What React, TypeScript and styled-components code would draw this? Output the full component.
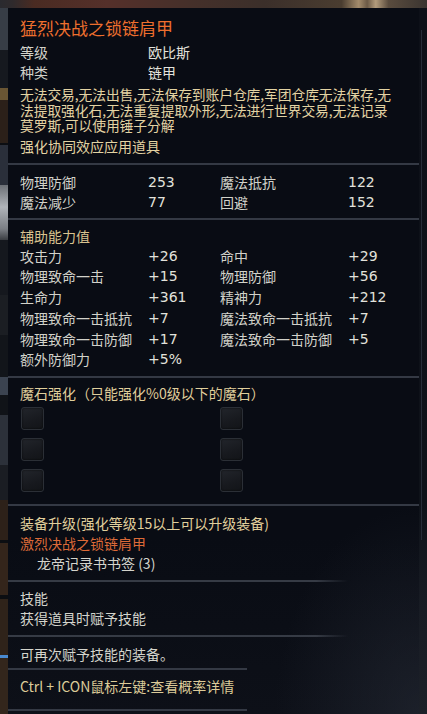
import React from "react";
import styled, { createGlobalStyle } from "styled-components";

const Global = createGlobalStyle`
  html, body { margin: 0; padding: 0; background: #0c0f16; }
  body { font-family: "Noto Sans CJK SC", "Noto Sans", sans-serif; }
  * { box-sizing: border-box; }
`;

const Page = styled.div`
  width: 427px;
  height: 714px;
  overflow: hidden;
  display: flex;
  flex-direction: column;
  background: #0c0f16;
`;

const TopStrip = styled.div`
  height: 8px;
  flex: none;
  background: linear-gradient(90deg, #2a2a2f 0, #2f2a2c 3%, #4a2b22 8%, #55302a 25%, #45302a 45%, #3b2f2a 62%, #4a3d30 80%, #a48c6c 84%, #6c5a46 86%, #b39c7c 88%, #5a4c3e 91%, #3a3430 100%);
`;

const Body = styled.div`
  flex: 1;
  display: flex;
  flex-direction: row;
  min-height: 0;
`;

const LeftStrip = styled.div`
  width: 8px;
  flex: none;
  display: flex;
  flex-direction: column;
`;

const Chip = styled.div<{ $h: number; $c: string }>`
  height: ${(p) => p.$h}px;
  flex: none;
  background: ${(p) => p.$c};
`;

const RightStrip = styled.div`
  flex: 1;
  background:
    linear-gradient(90deg, transparent 2px, #262c38 2px 3px, transparent 3px) 0 22px / 100% 510px no-repeat,
    linear-gradient(180deg, #0d1018 0, #0e1219 70%, #181c24 85%, #1c2028 100%);
`;

const Tooltip = styled.div`
  width: 411px;
  flex: none;
  display: flex;
  flex-direction: column;
  color: #d4d4cc;
  font-size: 14px;
  background:
    radial-gradient(ellipse 180px 260px at 100% 100%, rgba(40, 45, 56, 0.55), transparent 80%),
    linear-gradient(180deg, #090c14 0, #090c14 75%, #0d1018 100%);
`;

const Section = styled.div<{ $pt: number; $pb: number; $fade?: boolean; $first?: boolean }>`
  padding: ${(p) => p.$pt}px 12px ${(p) => p.$pb}px 12px;
  ${(p) =>
    p.$first
      ? ""
      : p.$fade
      ? `background: linear-gradient(90deg, #363b45 0, #363b45 308px, rgba(54,59,69,0) 340px) top left / 100% 2px no-repeat; padding-top: ${p.$pt + 2}px;`
      : `border-top: 2px solid #343944;`}
`;

const Title = styled.div<{ $c?: string }>`
  font-size: 17px;
  line-height: 24px;
  color: ${(p) => p.$c || "#ee6f2e"};
  margin-bottom: 2px;
`;

const KV = styled.div`
  display: grid;
  grid-template-columns: 128px 1fr;
  line-height: 20px;
`;

const Label = styled.span<{ $c?: string }>`
  color: ${(p) => p.$c || "#d2d2ca"};
  white-space: nowrap;
`;

const Value = styled.span`
  color: #e2e2dc;
  white-space: nowrap;
`;

const Num = styled.span`
  font-family: "DejaVu Sans", "Noto Sans", sans-serif;
  color: #e2e2dc;
  white-space: nowrap;
  font-size: 14px;
`;

const Desc = styled.div`
  margin-top: 5px;
  display: flex;
  flex-direction: column;
  color: #e3d3a3;
  letter-spacing: -0.1px;
`;

const DescLine = styled.div`
  height: 15.5px;
  line-height: 15.5px;
  font-size: 13.8px;
  white-space: nowrap;
`;

const Line = styled.div<{ $c?: string; $indent?: number; $mt?: number }>`
  line-height: 20px;
  color: ${(p) => p.$c || "#d4d4cc"};
  padding-left: ${(p) => p.$indent || 0}px;
  margin-top: ${(p) => p.$mt || 0}px;
  white-space: nowrap;
`;

const StatGrid = styled.div<{ $lh: number }>`
  display: grid;
  grid-template-columns: 128px 72px 128px 1fr;
  line-height: ${(p) => p.$lh}px;
`;

const SocketGrid = styled.div`
  display: grid;
  grid-template-columns: 199px 23px;
  row-gap: 8px;
  margin-top: 4px;
  padding-left: 1px;
`;

const Socket = styled.div`
  width: 23px;
  height: 23px;
  border-radius: 3px;
  border: 1px solid #2b2f36;
  background: linear-gradient(160deg, #22252b 0, #17191e 60%, #121418 100%);
  box-shadow: inset 0 0 2px rgba(0, 0, 0, 0.8);
`;

const HintBox = styled.div`
  width: 239px;
  border-top: 2px solid #343944;
  border-bottom: 2px solid #343944;
  padding: 6px 12px 13px 12px;
  line-height: 20px;
  color: #dccb98;
  white-space: nowrap;
`;

const leftChips: [number, string][] = [
  [42, "#373d46"],
  [38, "#16191f"],
  [12, "#6a5634"],
  [43, "#2b2019"],
  [2, "#0c0e12"],
  [40, "#2a2f3a"],
  [55, "linear-gradient(180deg,#6c7076,#b0b4ba 40%,#7a7e84 80%,#3a3d42)"],
  [55, "#15181e"],
  [40, "#1b1e23"],
  [42, "#12151a"],
  [18, "#3b4350"],
  [20, "#101318"],
  [50, "#2c313a"],
  [35, "#1a1d23"],
  [40, "#2d2119"],
  [3, "#0c0e12"],
  [52, "#34251b"],
  [4, "#0c0e12"],
  [56, "#2f231a"],
  [3, "#4a8ad0"],
  [60, "#33261c"],
];

const stats1: [string, string, string, string][] = [
  ["物理防御", "253", "魔法抵抗", "122"],
  ["魔法减少", "77", "回避", "152"],
];

const stats2: [string, string, string, string][] = [
  ["攻击力", "+26", "命中", "+29"],
  ["物理致命一击", "+15", "物理防御", "+56"],
  ["生命力", "+361", "精神力", "+212"],
  ["物理致命一击抵抗", "+7", "魔法致命一击抵抗", "+7"],
  ["物理致命一击防御", "+17", "魔法致命一击防御", "+5"],
  ["额外防御力", "+5%", "", ""],
];

const descLines = [
  "无法交易,无法出售,无法保存到账户仓库,军团仓库无法保存,无",
  "法提取强化石,无法重复提取外形,无法进行世界交易,无法记录",
  "莫罗斯,可以使用锤子分解",
];

export default function App() {
  return (
    <Page>
      <Global />
      <TopStrip />
      <Body>
        <LeftStrip>
          {leftChips.map(([h, c], i) => (
            <Chip key={i} $h={h} $c={c} />
          ))}
        </LeftStrip>
        <Tooltip>
          <Section $first $pt={8} $pb={7}>
            <Title>猛烈决战之锁链肩甲</Title>
            <KV>
              <Label>等级</Label>
              <Value>欧比斯</Value>
              <Label>种类</Label>
              <Value>链甲</Value>
            </KV>
            <Desc>
              {descLines.map((l) => (
                <DescLine key={l}>{l}</DescLine>
              ))}
            </Desc>
            <Line $c="#e3d3a3" $mt={2}>强化协同效应应用道具</Line>
          </Section>
          <Section $pt={7} $pb={6}>
            <StatGrid $lh={20}>
              {stats1.map((r) => (
                <React.Fragment key={r[0]}>
                  <Label>{r[0]}</Label>
                  <Num>{r[1]}</Num>
                  <Label>{r[2]}</Label>
                  <Num>{r[3]}</Num>
                </React.Fragment>
              ))}
            </StatGrid>
          </Section>
          <Section $pt={6} $pb={6}>
            <Line $c="#d9c38f">辅助能力值</Line>
            <StatGrid $lh={20.8}>
              {stats2.map((r) => (
                <React.Fragment key={r[0]}>
                  <Label>{r[0]}</Label>
                  <Num>{r[1]}</Num>
                  <Label>{r[2]}</Label>
                  <Num>{r[3]}</Num>
                </React.Fragment>
              ))}
            </StatGrid>
          </Section>
          <Section $pt={5} $pb={12}>
            <Line $c="#e0cf9c">魔石强化（只能强化%0级以下的魔石）</Line>
            <SocketGrid>
              {Array.from({ length: 6 }).map((_, i) => (
                <Socket key={i} />
              ))}
            </SocketGrid>
          </Section>
          <Section $pt={7} $pb={7}>
            <Line $c="#e0cf9c">装备升级(强化等级15以上可以升级装备)</Line>
            <Line $c="#dc6a38">激烈决战之锁链肩甲</Line>
            <Line $c="#d4d4cc" $indent={17}>龙帝记录书书签 (3)</Line>
          </Section>
          <Section $fade $pt={6} $pb={7}>
            <Line>技能</Line>
            <Line>获得道具时赋予技能</Line>
          </Section>
          <Section $fade $pt={7} $pb={4}>
            <Line>可再次赋予技能的装备。</Line>
          </Section>
          <HintBox>Ctrl + ICON鼠标左键:查看概率详情</HintBox>
        </Tooltip>
        <RightStrip />
      </Body>
    </Page>
  );
}
